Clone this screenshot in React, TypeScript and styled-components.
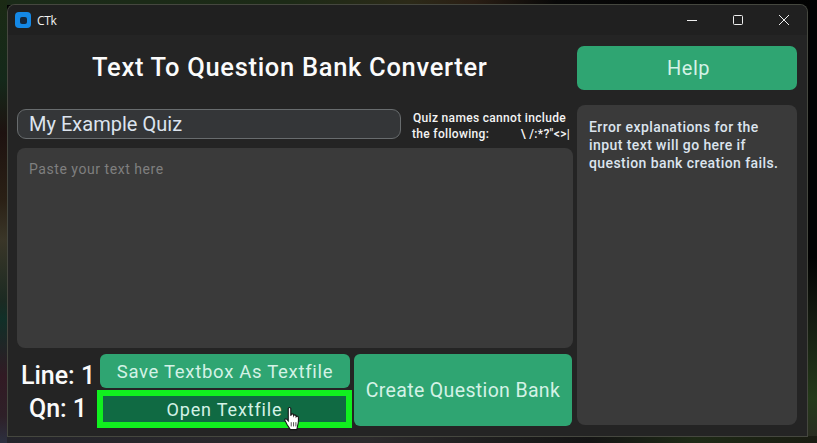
import React from "react";
import styled, { createGlobalStyle } from "styled-components";

const Global = createGlobalStyle`
  html, body { margin: 0; padding: 0; background: #050505; }
  * { box-sizing: border-box; }
`;

const Desktop = styled.div`
  width: 817px;
  height: 443px;
  padding: 5px 10px 7px 8px;
  overflow: hidden;
  background:
    linear-gradient(180deg, #1b2a14 0%, #14291a 18%, #1e1210 30%, #2a2015 45%, #3a3628 54%, #1b2a22 68%, #103028 72%, #321a24 85%, #2e2028 94%, #2c3040 100%) left top / 7px 100% no-repeat,
    linear-gradient(90deg, #1a2a18 0%, #1c2a16 35%, #2c2a18 50%, #2a1e14 58%, #080808 68%, #020202 100%) left top / 100% 5px no-repeat,
    linear-gradient(90deg, #24242a 0%, #2c2a2c 45%, #1c1c1c 62%, #141414 72%, #1e2a16 85%, #1a1c12 100%) left bottom / 100% 7px no-repeat,
    linear-gradient(180deg, #020202 0%, #020202 58%, #141a10 72%, #253a1a 90%, #2a2a22 100%);
`;

const Win = styled.div`
  width: 799px;
  height: 431px;
  display: flex;
  flex-direction: column;
  background: #242424;
  border-radius: 7px 7px 0 0;
  box-shadow: 0 0 0 1px #45473f;
  font-family: Roboto, "Liberation Sans", sans-serif;
  overflow: hidden;
`;

const TitleBar = styled.div`
  height: 30px;
  flex: none;
  display: flex;
  align-items: center;
  background: #202020;
  padding-left: 7px;
`;

const AppIcon = styled.div`
  width: 16px;
  height: 16px;
  border-radius: 4px;
  background: #1488e6;
  display: flex;
  align-items: center;
  justify-content: center;
  &::after {
    content: "";
    width: 7px;
    height: 7px;
    border-radius: 2px;
    background: #14263a;
  }
`;

const AppName = styled.span`
  margin-left: 6px;
  color: #f0f0f0;
  font: 12px "Open Sans", sans-serif;
  letter-spacing: -0.3px;
`;

const Controls = styled.div`
  margin-left: auto;
  display: flex;
`;

const Control = styled.div`
  width: 46px;
  height: 30px;
  display: flex;
  align-items: center;
  justify-content: center;
  color: #eee;
`;

const Body = styled.div`
  flex: 1;
  display: grid;
  grid-template-columns: 556px 220px;
  column-gap: 4px;
  padding: 11px 0 0 9px;
`;

const LeftCol = styled.div`
  display: flex;
  flex-direction: column;
`;

const RightCol = styled.div`
  display: flex;
  flex-direction: column;
`;

const Heading = styled.div`
  height: 44px;
  flex: none;
  display: flex;
  align-items: center;
  padding: 0 0 2px 75px;
  margin-bottom: 19px;
  color: #fbfbfb;
  font-size: 25.5px;
  font-weight: 500;
  letter-spacing: 0.69px;
  white-space: nowrap;
`;

const NameRow = styled.div`
  height: 30px;
  flex: none;
  display: flex;
  margin-bottom: 9px;
`;

const NameInput = styled.div`
  width: 384px;
  height: 30px;
  border: 1px solid #686c6e;
  border-radius: 9px;
  background: #343638;
  color: #dce4ee;
  font-size: 20px;
  letter-spacing: 0.02px;
  line-height: 28px;
  padding-left: 11px;
  white-space: nowrap;
`;

const Note = styled.div`
  width: 158px;
  margin-left: 11px;
  margin-top: 1px;
  color: #f4f4f4;
  font-size: 12px;
  font-weight: 500;
  letter-spacing: 0.32px;
  line-height: 16px;
`;

const NoteHead = styled.div`
  padding-left: 1px;
  white-space: nowrap;
`;

const NoteLine = styled.div`
  display: flex;
  justify-content: space-between;
  white-space: nowrap;
`;

const TextArea = styled.div`
  height: 200px;
  flex: none;
  margin-bottom: 6px;
  border-radius: 8px;
  background: #3a3a3a;
  color: #7f7f7f;
  font-size: 14px;
  letter-spacing: 0.55px;
  padding: 13px 12px;
`;

const Bottom = styled.div`
  display: flex;
  height: 72px;
`;

const Counters = styled.div`
  width: 80px;
  flex: none;
  margin-right: 3px;
  display: flex;
  flex-direction: column;
  align-items: center;
  justify-content: center;
  gap: 3px;
  padding: 4px 0 0 2px;
  color: #fafafa;
  font-size: 25px;
  font-weight: 500;
  line-height: 30px;
  white-space: nowrap;
`;

const FileButtons = styled.div`
  width: 250px;
  flex: none;
  display: flex;
  flex-direction: column;
`;

const Btn = styled.div`
  display: flex;
  align-items: center;
  justify-content: center;
  background: #2fa572;
  border-radius: 6px;
  color: #d4f2e6;
  white-space: nowrap;
`;

const SaveBtn = styled(Btn)`
  height: 34px;
  flex: none;
  padding-top: 1px;
  font-size: 18.5px;
  letter-spacing: 0.7px;
`;

const OpenBtn = styled(Btn)`
  position: relative;
  height: 38px;
  flex: none;
  margin: 2px -2px 0 -3px;
  border: 6px solid #11f01f;
  border-radius: 0;
  background: #106a43;
  font-size: 18px;
  letter-spacing: 0.85px;
`;

const Pointer = styled.svg`
  position: absolute;
  left: 181px;
  top: 10px;
`;

const CreateBtn = styled(Btn)`
  width: 218px;
  flex: none;
  margin-left: 4px;
  font-size: 19.5px;
  letter-spacing: 0.35px;
`;

const HelpBtn = styled(Btn)`
  height: 44px;
  flex: none;
  margin-bottom: 15px;
  border-radius: 7px;
  padding-left: 3px;
  font-size: 20px;
  letter-spacing: 0.55px;
`;

const ErrorPanel = styled.div`
  height: 320px;
  border-radius: 8px;
  background: #3a3a3a;
  color: #dce4ee;
  font-size: 14px;
  font-weight: 500;
  letter-spacing: 0.42px;
  line-height: 18px;
  padding: 13px 12px;
`;

export default function App() {
  return (
    <>
      <Global />
      <Desktop>
        <Win>
          <TitleBar>
            <AppIcon />
            <AppName>CTk</AppName>
            <Controls>
              <Control>
                <svg width="12" height="12" viewBox="0 0 12 12"><path d="M1 6.5h10" stroke="currentColor" strokeWidth="1" /></svg>
              </Control>
              <Control>
                <svg width="12" height="12" viewBox="0 0 12 12"><rect x="1.5" y="1.5" width="9" height="9" rx="1" fill="none" stroke="currentColor" /></svg>
              </Control>
              <Control>
                <svg width="12" height="12" viewBox="0 0 12 12"><path d="M1 1l10 10M11 1L1 11" stroke="currentColor" strokeWidth="1" /></svg>
              </Control>
            </Controls>
          </TitleBar>
          <Body>
            <LeftCol>
              <Heading>Text To Question Bank Converter</Heading>
              <NameRow>
                <NameInput>My Example Quiz</NameInput>
                <Note>
                  <NoteHead>Quiz names cannot include</NoteHead>
                  <NoteLine>
                    <span>the following:</span>
                    <span>\ /:*?"&lt;&gt;|</span>
                  </NoteLine>
                </Note>
              </NameRow>
              <TextArea>Paste your text here</TextArea>
              <Bottom>
                <Counters>
                  <span>Line: 1</span>
                  <span>Qn: 1</span>
                </Counters>
                <FileButtons>
                  <SaveBtn>Save Textbox As Textfile</SaveBtn>
                  <OpenBtn>
                    Open Textfile
                    <Pointer width="17" height="26" viewBox="0 0 16 24">
                      <path
                        d="M4 2.2c0-1.4 2.4-1.4 2.4 0V9l.4-1.2c.5-1 2.1-.8 2.2.3l.1.7c.4-1 2-.9 2.2.2l.1.8c.5-.8 2-.6 2.1.5.2 2.6.2 5.200-.6 7.700L12 22H6l-3-4.500L.9 13.400c-.6-1.300 1-2.200 1.900-1.100L4 13.700z"
                        fill="#fff"
                        stroke="#111"
                        strokeWidth="1"
                      />
                      <path d="M6.800 15v4M9 15v4M11.200 15v4" stroke="#333" strokeWidth=".8" />
                    </Pointer>
                  </OpenBtn>
                </FileButtons>
                <CreateBtn>Create Question Bank</CreateBtn>
              </Bottom>
            </LeftCol>
            <RightCol>
              <HelpBtn>Help</HelpBtn>
              <ErrorPanel>
                Error explanations for the
                <br />
                input text will go here if
                <br />
                question bank creation fails.
              </ErrorPanel>
            </RightCol>
          </Body>
        </Win>
      </Desktop>
    </>
  );
}
